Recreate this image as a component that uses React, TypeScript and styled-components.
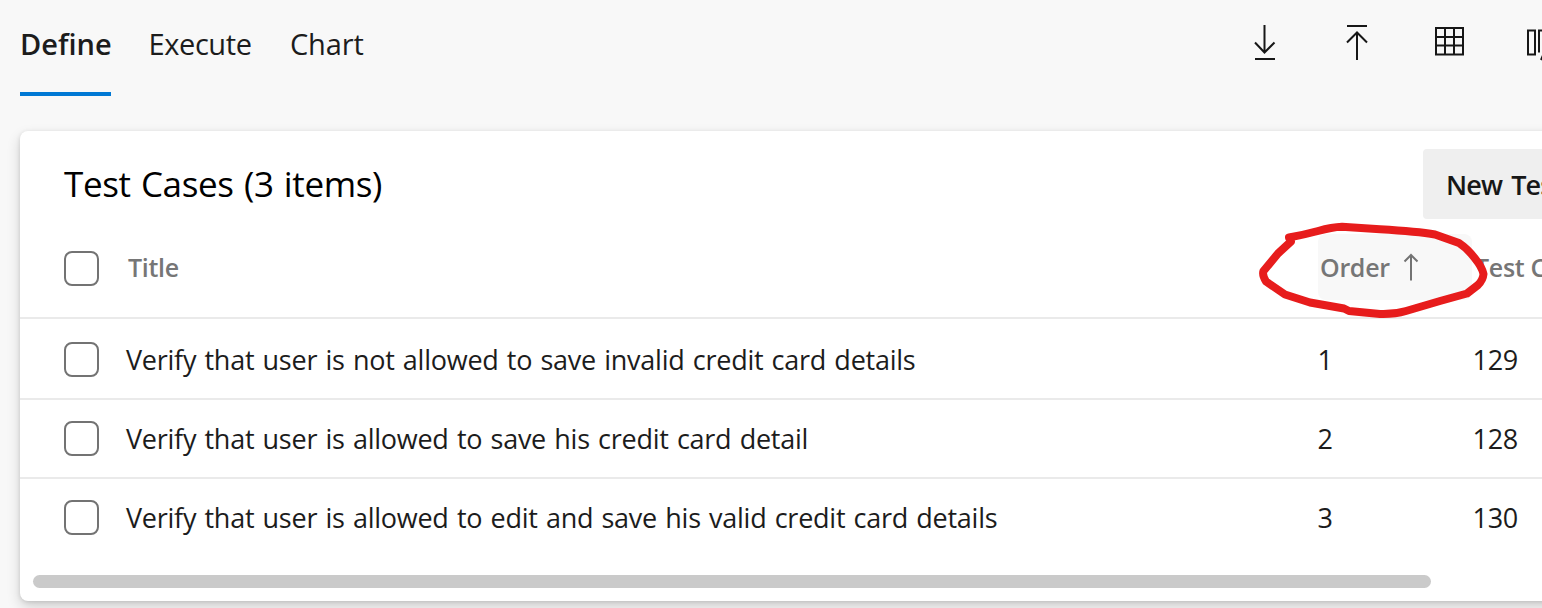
import React from "react";
import styled, { createGlobalStyle } from "styled-components";

const GlobalStyle = createGlobalStyle`
  * { box-sizing: border-box; }
  html, body { margin: 0; overflow: hidden; background: #f8f8f8; }
  body { font-family: "Open Sans", "Noto Sans", sans-serif; color: #1c1c1c; }
`;

const Page = styled.main`
  position: relative;
  width: 1542px;
  height: 608px;
  overflow: hidden;
  background: #f8f8f8;
`;

const TopBar = styled.header`
  display: flex;
  height: 131px;
  padding-left: 20px;
`;

const Tabs = styled.nav`
  display: flex;
  gap: 38px;
  flex: none;
`;

const Tab = styled.a<{ $active?: boolean; $width: number; $spacing: number }>`
  width: ${(p) => p.$width}px;
  height: 96px;
  line-height: 88px;
  font-size: 29px;
  font-weight: ${(p) => (p.$active ? 600 : 400)};
  letter-spacing: ${(p) => p.$spacing}px;
  white-space: nowrap;
  border-bottom: 4px solid ${(p) => (p.$active ? "#0078d4" : "transparent")};
`;

const Tools = styled.div`
  display: flex;
  margin-left: 878px;
  padding-top: 22px;
  gap: 52px;
`;

const ToolIcon = styled.svg`
  display: block;
  flex: none;
  width: 40px;
  height: 40px;
  fill: none;
  stroke: #171717;
  stroke-width: 2;
`;

const Card = styled.section`
  width: 1600px;
  height: 470px;
  margin-left: 20px;
  border-radius: 8px;
  background: #fff;
  box-shadow: 0 6px 14px rgba(0, 0, 0, 0.16), 0 1px 4px rgba(0, 0, 0, 0.12);
`;

const CardHeader = styled.div`
  display: flex;
  justify-content: space-between;
  height: 103px;
  padding: 18px 0 0 44px;
`;

const Heading = styled.h2`
  margin: 0;
  font-size: 35px;
  font-weight: 400;
  line-height: 70px;
  letter-spacing: -0.35px;
  word-spacing: 1.5px;
  color: #000;
`;

const Button = styled.button`
  width: 197px;
  height: 70px;
  padding: 1px 0 0 23px;
  border: 0;
  border-radius: 4px;
  background: #efefef;
  color: #171717;
  font: 600 27px "Open Sans", sans-serif;
  letter-spacing: -0.9px;
  word-spacing: 3px;
  text-align: left;
  white-space: nowrap;
`;

const Row = styled.div<{ $head?: boolean; $first?: boolean; $last?: boolean }>`
  display: grid;
  grid-template-columns: 62px 1192px 155px 1fr;
  align-items: center;
  height: ${(p) => (p.$head ? 85 : p.$first ? 81 : 79)}px;
  padding-left: 44px;
  padding-bottom: ${(p) => (p.$head ? 17 : 0)}px;
  padding-top: ${(p) => (p.$first ? 2 : 0)}px;
  border-bottom: 2px solid ${(p) => (p.$last ? "transparent" : "#eaeaea")};
  font-size: 27px;
  white-space: nowrap;
`;

const Checkbox = styled.span<{ $offset?: number }>`
  width: 35px;
  height: 35px;
  margin-top: ${(p) => p.$offset ?? 0}px;
  border: 2px solid #737373;
  border-radius: 8px;
`;

const Label = styled.span`
  letter-spacing: -0.25px;
  word-spacing: 1.5px;
`;

const NumberLabel = styled.span`
  margin-left: -0.5px;
  letter-spacing: -0.3px;
`;

const HeadLabel = styled.span`
  padding-left: 2px;
  color: #767676;
  font-size: 25px;
  font-weight: 600;
  letter-spacing: -0.3px;
`;

const SortCell = styled.div`
  display: flex;
  align-items: center;
  gap: 13px;
  width: 154px;
  height: 66px;
  border-radius: 8px;
  background: #f8f8f8;
`;

const SortArrow = styled.svg`
  width: 16px;
  height: 30px;
  fill: none;
  stroke: #737373;
  stroke-width: 2;
`;

const ScrollThumb = styled.div`
  width: 1398px;
  height: 13px;
  margin: 17px 0 0 13px;
  border-radius: 7px;
  background: #cacaca;
`;

const Highlight = styled.svg`
  position: absolute;
  left: 1250px;
  top: 215px;
  width: 250px;
  height: 110px;
  fill: none;
  stroke: #e71c1c;
  stroke-width: 8;
  stroke-linejoin: round;
  stroke-linecap: round;
`;

const cases = [
  { title: "Verify that user is not allowed to save invalid credit card details", order: 1, id: 129 },
  { title: "Verify that user is allowed to save his credit card detail", order: 2, id: 128 },
  { title: "Verify that user is allowed to edit and save his valid credit card details", order: 3, id: 130 },
];

export default function App() {
  return (
    <>
      <GlobalStyle />
      <Page>
        <TopBar>
          <Tabs>
            <Tab $active $width={90.5} $spacing={0}>Define</Tab>
            <Tab $width={103.5} $spacing={-0.4}>Execute</Tab>
            <Tab $width={76} $spacing={-0.15}>Chart</Tab>
          </Tabs>
          <Tools>
            <ToolIcon viewBox="0 0 40 40"><path d="M20.5 3V30M11 20.5L20.5 30.5L30.5 20.5M11 37H31" /></ToolIcon>
            <ToolIcon viewBox="0 0 40 40"><path d="M11 4H31M21 38V10.5M11 20.5L21 10.5L31 20.5" /></ToolIcon>
            <ToolIcon viewBox="0 0 40 40"><path d="M8 6H35V32.5H8ZM17 6V32.5M26 6V32.5M8 15H35M8 23.5H35" /></ToolIcon>
            <ToolIcon viewBox="0 0 40 40"><path d="M8 8.5H15V32.5H8ZM19 30.5V8.5H28M23.5 32L21 38" /></ToolIcon>
          </Tools>
        </TopBar>
        <Card>
          <CardHeader>
            <Heading>Test Cases (3 items)</Heading>
            <Button>New Test Case</Button>
          </CardHeader>
          <Row $head>
            <Checkbox $offset={3} />
            <HeadLabel>Title</HeadLabel>
            <SortCell>
              <HeadLabel>Order</HeadLabel>
              <SortArrow viewBox="0 0 16 30"><path d="M8 28.5V3M1.5 9.5L8 3L14.5 9.5" /></SortArrow>
            </SortCell>
            <HeadLabel>Test Case Id</HeadLabel>
          </Row>
          {cases.map((item, i) => (
            <Row key={item.id} $first={i === 0} $last={i === cases.length - 1}>
              <Checkbox />
              <Label>{item.title}</Label>
              <NumberLabel>{item.order}</NumberLabel>
              <NumberLabel>{item.id}</NumberLabel>
            </Row>
          ))}
          <ScrollThumb />
        </Card>
        <Highlight viewBox="1250 215 250 110">
          <path d="M1289 237.5Q1303 235 1318 231Q1332 227 1342 226.7L1380 229.3Q1418 231.5 1435 234.5L1459 243Q1468 249 1475 258.5Q1482 267 1483.5 274Q1483 280 1478 285L1467 293.5L1440 301L1406 311Q1394 314.5 1380 314L1349 311L1344 308.5L1310 302.5L1285 294.5L1266 281.5Q1262 275 1263.5 271L1278 253.5L1291 241.5L1290 238" />
        </Highlight>
      </Page>
    </>
  );
}
